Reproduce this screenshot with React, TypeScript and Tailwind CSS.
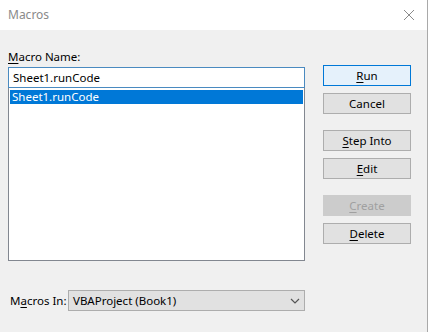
import React from "react";

const font = { fontFamily: '"Noto Sans", "Liberation Sans", sans-serif' };

function Btn({
  children,
  primary,
  disabled,
}: {
  children: React.ReactNode;
  primary?: boolean;
  disabled?: boolean;
}) {
  const cls = disabled
    ? "border-[#cccccc] bg-[#cccccc] text-[#a0a0a0]"
    : primary
    ? "border-[#0078d7] bg-[#e5f1fb] text-black"
    : "border-[#adadad] bg-[#e1e1e1] text-black";
  return (
    <div
      className={`h-[21px] w-[88px] border flex items-center justify-center text-[11.5px] leading-none ${cls}`}
    >
      {children}
    </div>
  );
}

export default function App() {
  return (
    <div className="w-[430px] h-[332px] bg-white flex" style={font}>
      <div className="w-[428px] h-full border-r border-[#a9a9a9] bg-[#f0f0f0] flex flex-col">
        {/* title bar */}
        <div className="h-[30px] bg-white flex items-center justify-between pl-[8px] pr-[12px]">
          <span className="text-[12px] text-[#8a8a8a]">Macros</span>
          <svg width="12" height="12" viewBox="0 0 12 12">
            <path d="M1 1L11 11M11 1L1 11" stroke="#8a8a8a" strokeWidth="1" />
          </svg>
        </div>

        <div className="flex flex-1">
          {/* left column */}
          <div className="pl-[8px] w-[305px] flex flex-col">
            <div className="mt-[19px] h-[16px] text-[11.5px] leading-[16px] text-black">
              <span className="underline underline-offset-2">M</span>acro Name:
            </div>
            <div className="mt-[2px] h-[21px] border border-[#4a8ac0] bg-white flex items-center pl-[4px] text-[11.5px] text-black">
              Sheet1.runCode
            </div>
            <div className="h-[173px] border border-t-0 border-[#828790] bg-white pt-[2px] px-[1px]">
              <div className="h-[14px] bg-[#0078d7] text-white text-[11.5px] leading-[14px] pl-[2px]">
                Sheet1.runCode
              </div>
            </div>
            <div className="mt-[29px] flex items-center">
              <div className="w-[60px] shrink-0 pl-[2px] text-[11.5px] text-black whitespace-nowrap">
                M<span className="underline underline-offset-2">a</span>cros In:
              </div>
              <div className="flex-1 h-[21px] border border-[#adadad] bg-[#e1e1e1] flex items-center justify-between pl-[4px] pr-[4px] text-[11.5px] text-black">
                <span>VBAProject (Book1)</span>
                <svg width="10" height="6" viewBox="0 0 10 6">
                  <path d="M1 1L5 5L9 1" stroke="#555" strokeWidth="1.2" fill="none" />
                </svg>
              </div>
            </div>
          </div>

          {/* right column */}
          <div className="ml-[18px] mt-[35px] flex flex-col">
            <Btn primary>
              <span className="underline underline-offset-2">R</span>un
            </Btn>
            <div className="mt-[7px]">
              <Btn>Cancel</Btn>
            </div>
            <div className="mt-[16px]">
              <Btn>
                <span className="underline underline-offset-2">S</span>tep Into
              </Btn>
            </div>
            <div className="mt-[7px]">
              <Btn>
                <span className="underline underline-offset-2">E</span>dit
              </Btn>
            </div>
            <div className="mt-[16px]">
              <Btn disabled>
                <span className="underline underline-offset-2">C</span>reate
              </Btn>
            </div>
            <div className="mt-[7px]">
              <Btn>
                <span className="underline underline-offset-2">D</span>elete
              </Btn>
            </div>
          </div>
        </div>
      </div>
    </div>
  );
}
